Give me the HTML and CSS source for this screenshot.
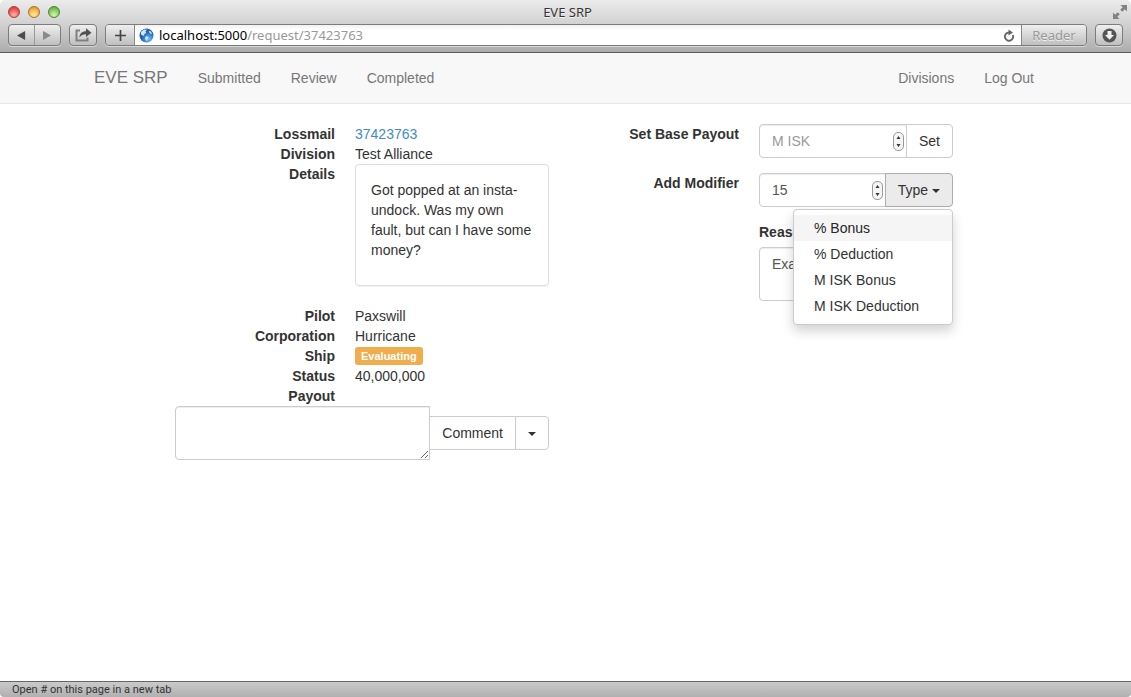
FILE: index.html
```html
<!DOCTYPE html>
<html lang="en">
<head>
<meta charset="utf-8">
<title>EVE SRP</title>
<link rel="stylesheet" href="styles.css">
</head>
<body>
<header class="chrome">
  <div class="titlebar">
    <div class="lights">
      <button class="light light-red" aria-label="Close"></button>
      <button class="light light-amber" aria-label="Minimize"></button>
      <button class="light light-green" aria-label="Zoom"></button>
    </div>
    <div class="title">EVE SRP</div>
    <button class="fullscreen" aria-label="Full screen">
      <svg width="14" height="14" viewBox="0 0 14 14" fill="#828282"><path d="M7.5 0H14V6.500L11.800 4.300L9.300 6.800L7.200 4.700L9.700 2.200ZM0 7.500V14H6.500L4.300 11.800L6.800 9.300L4.700 7.200L2.200 9.700Z"/></svg>
    </button>
  </div>
  <div class="toolbar">
    <div class="tool-group">
      <button class="tool tool-nav" aria-label="Back"><svg width="9" height="9" viewBox="0 0 10 10"><path d="M0 5L9 0V10Z" fill="#4c4c4c"/></svg></button>
      <button class="tool tool-nav" aria-label="Forward"><svg width="9" height="9" viewBox="0 0 10 10"><path d="M9 5L0 0V10Z" fill="#8b8b8b"/></svg></button>
    </div>
    <button class="tool tool-boxed" aria-label="Share">
      <svg width="17" height="14" viewBox="0 0 17 14"><path d="M5 2.500H1.500V12.500H12.500V9.500" fill="none" stroke="#808080" stroke-width="2"/><path d="M4.500 9.500C4.500 5.500 7 3.200 11 3.200V0.300L16.500 4.700L11 9V6.200C8 6.200 6 7 4.500 9.500Z" fill="#505050"/></svg>
    </button>
    <div class="address">
      <button class="tool tool-add" aria-label="Add bookmark"><svg width="11" height="11" viewBox="0 0 11 11"><path d="M5.500 0V11M0 5.500H11" stroke="#444" stroke-width="1.700"/></svg></button>
      <div class="url">
        <svg width="15" height="15" viewBox="0 0 15 15"><defs><radialGradient id="sea" cx=".65" cy=".75"><stop offset="0" stop-color="#6cc4ff"/><stop offset="1" stop-color="#2160b4"/></radialGradient></defs><circle cx="7.500" cy="7.500" r="7" fill="url(#sea)"/><path d="M2 4L5 1.500L8 1.700L6.500 3.300L7.300 4.700L5.500 6L4.500 8L2 6.500ZM9.500 3L12 3.500L13 6L11 5.500ZM7 8L9.500 9L8.500 11.500L7.300 13L6 10.500Z" fill="#cfe9fb"/></svg>
        <span class="url-text"><span class="host">localhost:5000</span>/request/37423763</span>
        <button class="reload" aria-label="Reload"><svg width="12" height="13" viewBox="0 0 12 13"><path d="M9.800 6A4.100 4.100 0 1 1 6 3.500" fill="none" stroke="#666" stroke-width="1.900"/><path d="M5.500 0.500L10 3.500L5.500 6.500Z" fill="#666"/></svg></button>
      </div>
      <button class="tool tool-reader">Reader</button>
    </div>
    <button class="tool tool-boxed" aria-label="Downloads">
      <svg width="15" height="15" viewBox="0 0 15 15"><circle cx="7.500" cy="7.500" r="7" fill="#555"/><path d="M5.500 3H9.500V7H12L7.500 11.800L3 7H5.500Z" fill="#f1f1f1"/></svg>
    </button>
  </div>
</header>

<nav class="navbar">
  <div class="nav-inner">
    <a class="brand" href="#">EVE SRP</a>
    <a class="nav-link" href="#">Submitted</a>
    <a class="nav-link" href="#">Review</a>
    <a class="nav-link" href="#">Completed</a>
    <a class="nav-link nav-right" href="#">Divisions</a>
    <a class="nav-link" href="#">Log Out</a>
  </div>
</nav>

<main class="content">
  <div class="columns">
    <section>
      <dl class="facts">
        <dt>Lossmail</dt><dd><a class="link" href="#">37423763</a></dd>
        <dt>Division</dt><dd>Test Alliance</dd>
        <dt>Details</dt><dd class="panel"><p class="panel-text">Got popped at an insta-undock. Was my own fault, but can I have some money?</p></dd>
        <dt>Pilot</dt><dd>Paxswill</dd>
        <dt>Corporation</dt><dd>Hurricane</dd>
        <dt>Ship</dt><dd><span class="badge">Evaluating</span></dd>
        <dt>Status</dt><dd>40,000,000</dd>
        <dt>Payout</dt><dd></dd>
      </dl>
      <form class="group comment-form">
        <textarea class="field area area-joined" aria-label="Comment"></textarea>
        <button type="button" class="btn btn-mid">Comment</button>
        <button type="button" class="btn btn-end" aria-label="More actions"><span class="caret"></span></button>
      </form>
    </section>

    <form class="edit-form">
      <label class="edit-label" for="payout">Set Base Payout</label>
      <div class="group">
        <div class="number">
          <input class="field" id="payout" type="number" placeholder="M ISK">
          <svg class="stepper" width="11" height="19" viewBox="0 0 11 19"><rect x=".5" y=".5" width="10" height="18" rx="4.500" fill="#f5f5f5" stroke="#999"/><path d="M3.500 7L5.500 4L7.500 7ZM3.500 12L5.500 15L7.500 12Z" fill="#333"/></svg>
        </div>
        <button type="button" class="btn btn-end">Set</button>
      </div>

      <label class="edit-label" for="modifier">Add Modifier</label>
      <div class="group">
        <div class="number">
          <input class="field" id="modifier" type="number" value="15">
          <svg class="stepper" width="11" height="19" viewBox="0 0 11 19"><rect x=".5" y=".5" width="10" height="18" rx="4.500" fill="#f5f5f5" stroke="#999"/><path d="M3.500 7L5.500 4L7.500 7ZM3.500 12L5.500 15L7.500 12Z" fill="#333"/></svg>
        </div>
        <button type="button" class="btn btn-end btn-open" aria-expanded="true">Type <span class="caret"></span></button>
        <div class="menu">
          <a class="menu-item menu-active" href="#">% Bonus</a>
          <a class="menu-item" href="#">% Deduction</a>
          <a class="menu-item" href="#">M ISK Bonus</a>
          <a class="menu-item" href="#">M ISK Deduction</a>
        </div>
      </div>

      <div class="reason">
        <label class="reason-label" for="reason">Reason</label>
        <textarea class="field area area-reason" id="reason">Example</textarea>
      </div>
    </form>
  </div>
</main>

<footer class="status">Open # on this page in a new tab</footer>
</body>
</html>
```
FILE: styles.css
```css
* { box-sizing: border-box; }

body {
  margin: 0;
  min-height: 100vh;
  display: flex;
  flex-direction: column;
  background: #fff;
  color: #333;
  font: 14px/20px "Helvetica Neue", "Liberation Sans", Arial, sans-serif;
}

button, input, textarea { font: inherit; color: inherit; margin: 0; }
button { border: 0; padding: 0; background: none; cursor: pointer; }
a { text-decoration: none; }
svg { display: block; }

/* Browser window */
.chrome {
  height: 53px;
  border-bottom: 1px solid #5c5c5c;
  border-radius: 5px 5px 0 0;
  background: linear-gradient(#ececec, #d2d2d2 45%, #adadad);
  font-family: "Lucida Grande", "Noto Sans", sans-serif;
  font-size: 13px;
}
.titlebar {
  height: 24px;
  padding: 0 4px 0 8px;
  display: grid;
  grid-template-columns: 1fr auto 1fr;
  align-items: center;
}
.lights { display: flex; gap: 8px; }
.light {
  width: 12px;
  height: 12px;
  border: 1px solid;
  border-radius: 50%;
}
.light-red { border-color: #a23f3b; background: radial-gradient(circle at 50% 80%, #ffb3ac, #ed5753 60%, #c7302e); }
.light-amber { border-color: #a8702b; background: radial-gradient(circle at 50% 80%, #ffeaa0, #f5b54b 60%, #cf8526); }
.light-green { border-color: #4e8238; background: radial-gradient(circle at 50% 80%, #d5f7ae, #83c661 60%, #559c39); }
.title { color: #333; text-shadow: 0 1px #f4f4f4; }
.fullscreen { justify-self: end; }

.toolbar { display: flex; gap: 8px; padding: 0 8px; }
.tool-group, .tool-boxed, .address {
  height: 22px;
  border: 1px solid #7c7c7c;
  border-radius: 4px;
  box-shadow: 0 1px #d6d6d6;
}
.tool-group, .tool-boxed, .tool-add, .tool-reader { background: linear-gradient(#efefef, #bfbfbf); }
.tool-group, .address { display: flex; overflow: hidden; }
.tool-group { width: 53px; }
.tool { display: flex; align-items: center; justify-content: center; }
.tool-nav { flex: 1; }
.tool-nav + .tool-nav { border-left: 1px solid #999; }
.tool-boxed { width: 28px; }
.address { flex: 1; }
.tool-add { width: 29px; border-right: 1px solid #888; }
.url {
  flex: 1;
  display: flex;
  align-items: center;
  padding: 0 6px 0 4px;
  gap: 5px;
  background: linear-gradient(#f1f1f1, #fff 5px);
}
.url-text { color: #999; }
.host { color: #000; }
.reload { margin-left: auto; }
.tool-reader {
  width: 65px;
  border-left: 1px solid #888;
  color: #999;
  text-shadow: 0 1px #eee;
}

.status {
  margin-top: auto;
  height: 16px;
  padding: 0 12px;
  border-top: 1px solid #666;
  border-radius: 0 0 4px 4px;
  background: linear-gradient(#cacaca, #b0b0b0);
  color: #333;
  font: 11px/15px "Lucida Grande", Roboto, sans-serif;
}

/* Site navigation */
.navbar {
  padding-right: 3px;
  border-bottom: 1px solid #e7e7e7;
  background: #f8f8f8;
}
.nav-inner {
  max-width: 970px;
  min-height: 50px;
  margin: 0 auto;
  display: flex;
  align-items: center;
}
.brand, .nav-link { padding: 15px; color: #777; }
.brand { font-size: 17px; }
.nav-right { margin-left: auto; }

/* Request page */
.content { padding: 20px 3px 20px 0; }
.columns {
  max-width: 778px;
  margin: 0 auto;
  display: grid;
  grid-template-columns: 1fr 1fr;
  gap: 30px;
  align-items: start;
}
.facts {
  margin: 0;
  display: grid;
  grid-template-columns: 160px 1fr;
  column-gap: 20px;
  grid-auto-rows: minmax(20px, auto);
}
.facts dt { font-weight: bold; text-align: right; }
.facts dd { margin: 0; }
.facts .panel {
  margin-bottom: 20px;
  padding: 15px;
  border: 1px solid #ddd;
  border-radius: 4px;
  box-shadow: 0 1px 1px rgba(0, 0, 0, .05);
}
.panel-text { margin: 0 0 10px; }
.link { color: #428bca; }
.badge {
  display: inline-block;
  padding: 0 6px;
  border-radius: 3px;
  background: #f0ad4e;
  color: #fff;
  font-size: 11px;
  font-weight: bold;
  line-height: 18px;
  vertical-align: top;
  margin-top: 1px;
}

/* Form controls */
.group { position: relative; display: flex; align-items: center; }
.field {
  display: block;
  width: 100%;
  height: 34px;
  padding: 6px 12px;
  border: 1px solid #ccc;
  border-radius: 4px;
  background: #fff;
  box-shadow: inset 0 1px 1px rgba(0, 0, 0, .075);
  color: #555;
}
.field::placeholder { color: #999; opacity: 1; }
.number { position: relative; flex: 1; }
.number .field { border-radius: 4px 0 0 4px; appearance: textfield; }
.number .field::-webkit-inner-spin-button { appearance: none; }
.stepper { position: absolute; right: 3px; top: 8px; }
.area { height: 54px; }
.area-joined { flex: 1; width: auto; min-width: 0; border-radius: 4px 0 0 4px; }
.area-reason { resize: none; overflow: hidden; }

.btn {
  height: 34px;
  padding: 6px 12px;
  margin-left: -1px;
  border: 1px solid #ccc;
  background: #fff;
  white-space: nowrap;
}
.btn-end { border-radius: 0 4px 4px 0; }
.btn-open { position: relative; border-color: #adadad; background: #ebebeb; }
.caret {
  display: inline-block;
  border: 4px solid transparent;
  border-top-color: #333;
  border-bottom: 0;
  vertical-align: middle;
}

.edit-form {
  display: grid;
  grid-template-columns: 160px 1fr;
  gap: 15px 20px;
}
.edit-label { font-weight: bold; text-align: right; }
.reason { grid-column: 2; }
.reason-label { display: block; margin-bottom: 5px; font-weight: bold; }

.menu {
  position: absolute;
  top: 100%;
  right: 0;
  z-index: 1;
  min-width: 160px;
  margin-top: 2px;
  padding: 5px 0;
  border: 1px solid #ccc;
  border-radius: 4px;
  background: #fff;
  box-shadow: 0 6px 12px rgba(0, 0, 0, .175);
}
.menu-item { display: block; padding: 3px 20px; color: #333; white-space: nowrap; }
.menu-active { background: #f5f5f5; color: #262626; }
```
